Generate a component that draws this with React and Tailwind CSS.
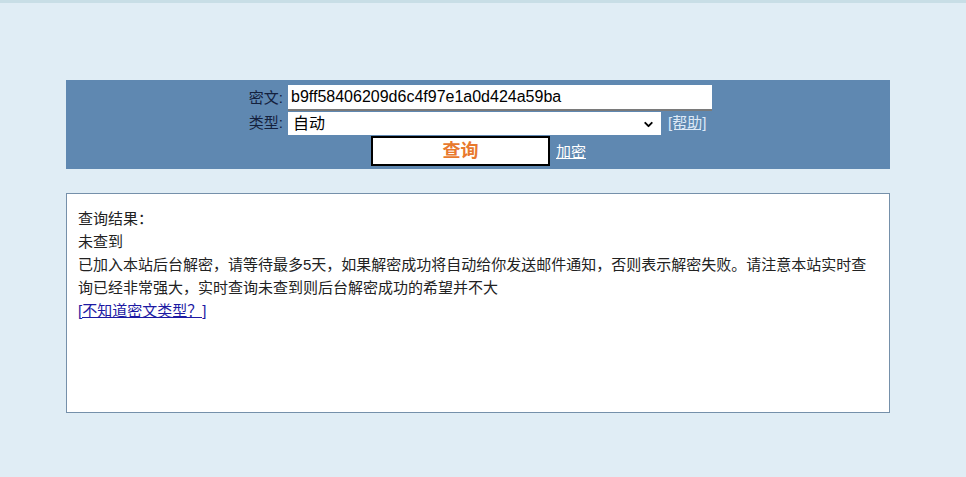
import { ChevronDown } from 'lucide-react'

const cjk = { fontFamily: '"Liberation Sans", "Noto Sans CJK SC", sans-serif' }

export default function App() {
  return (
    <div className="min-h-[477px] bg-[#e0edf5] border-t-[3px] border-[#c8dee6] pt-[77px]" style={cjk}>
      {/* Query form */}
      <div className="mx-[66px] w-[824px] h-[89px] bg-[#5f88b1] pt-[5px]">
        <div className="flex items-center h-[26px]">
          <label className="w-[222px] text-right pr-[5px] text-[15px] text-[#14213d]">密文:</label>
          <input
            defaultValue="b9ff58406209d6c4f97e1a0d424a59ba"
            className="w-[424px] h-[26px] bg-white border-b-2 border-[#7a7a7a] px-[3px] text-[16px] text-black outline-none"
          />
        </div>
        <div className="flex items-center h-[23px] mt-[1px]">
          <label className="w-[222px] text-right pr-[5px] text-[15px] text-[#14213d]">类型:</label>
          <div className="relative w-[373px] h-[23px] bg-white">
            <select className="appearance-none w-full h-full bg-transparent px-[5px] text-[16px] text-black outline-none">
              <option>自动</option>
            </select>
            <ChevronDown className="absolute right-[6px] top-[6px] pointer-events-none" size={13} strokeWidth={3.5} />
          </div>
          <a href="#" className="ml-[7px] text-[15px] text-[#dde9f7] underline">[帮助]</a>
        </div>
        <div className="flex items-center mt-[1px]">
          <button className="ml-[305px] w-[179px] h-[30px] bg-white border-2 border-black text-[18px] font-bold text-[#e8792e]">
            查询
          </button>
          <a href="#" className="ml-[6px] mt-[2px] text-[15px] text-white underline">加密</a>
        </div>
      </div>

      {/* Result */}
      <div className="mx-[66px] mt-[24px] w-[824px] h-[220px] bg-white border border-[#7590aa] pl-[11px] pr-[11px] pt-[13px] text-[15px] leading-[23px] text-[#222]">
        <div>查询结果：</div>
        <div>未查到</div>
        <div>
          已加入本站后台解密，请等待最多5天，如果解密成功将自动给你发送邮件通知，否则表示解密失败。请注意本站实时查
          <br />
          询已经非常强大，实时查询未查到则后台解密成功的希望并不大
        </div>
        <a href="#" className="text-[#1d1aa3] underline">[不知道密文类型？]</a>
      </div>
    </div>
  )
}
